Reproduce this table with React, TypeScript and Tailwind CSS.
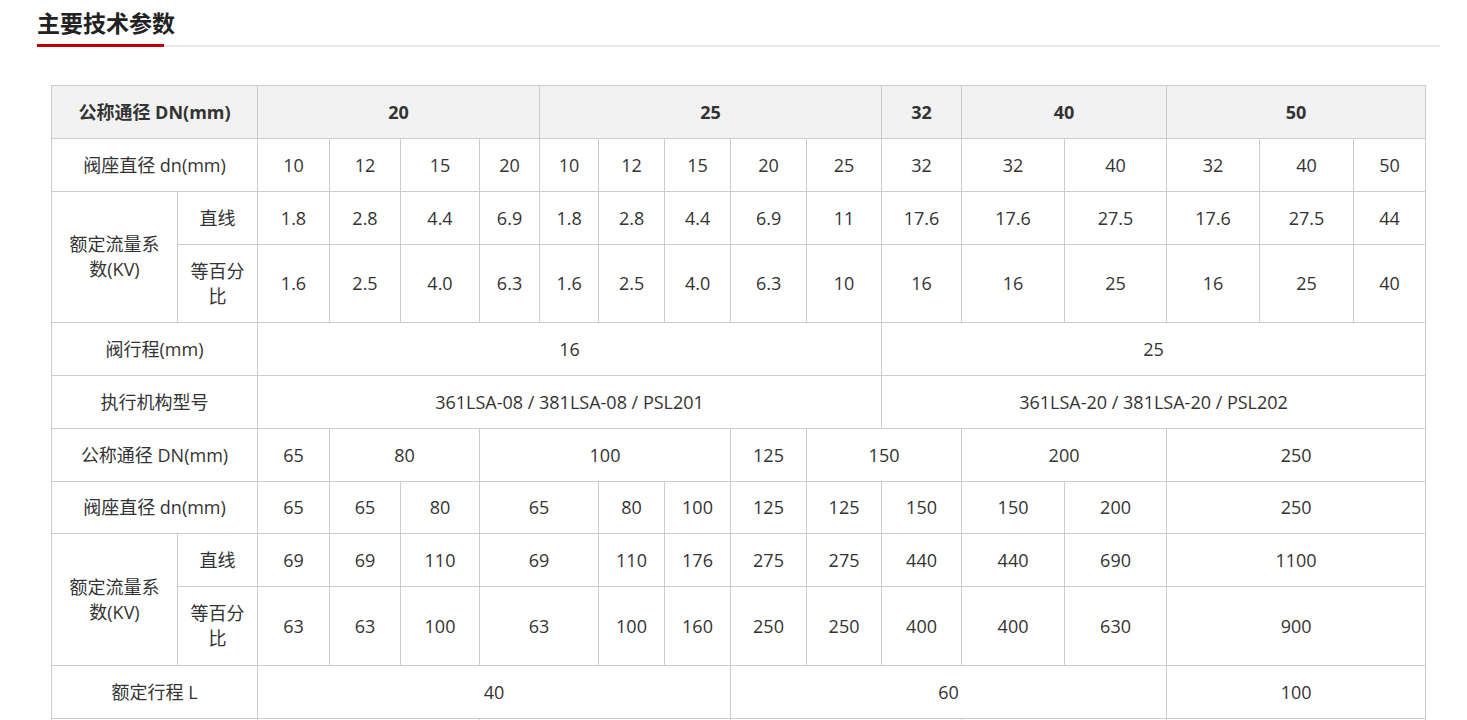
import React from "react";

type Cell = { t: string; c?: number; r?: number; px?: string };

const cols = [126, 80, 72, 71, 79, 60, 59, 66, 66, 76, 75, 80, 103, 102, 93, 94, 72];

const s = (arr: (string | Cell)[]): Cell[] => arr.map((x) => (typeof x === "string" ? { t: x } : x));

const header: Cell[] = s([
  { t: "公称通径 DN(mm)", c: 2 },
  { t: "20", c: 4 },
  { t: "25", c: 5 },
  "32",
  { t: "40", c: 2 },
  { t: "50", c: 3 },
]);

const rows: { h: string; cells: Cell[] }[] = [
  { h: "h-[53px]", cells: s([{ t: "阀座直径 dn(mm)", c: 2 }, "10", "12", "15", "20", "10", "12", "15", "20", "25", "32", "32", "40", "32", "40", "50"]) },
  { h: "h-[53px]", cells: s([{ t: "额定流量系数(KV)", r: 2, px: "px-[16px]" }, "直线", "1.8", "2.8", "4.4", "6.9", "1.8", "2.8", "4.4", "6.9", "11", "17.6", "17.6", "27.5", "17.6", "27.5", "44"]) },
  { h: "h-[78px]", cells: s(["等百分比", "1.6", "2.5", "4.0", "6.3", "1.6", "2.5", "4.0", "6.3", "10", "16", "16", "25", "16", "25", "40"]) },
  { h: "h-[53px]", cells: s([{ t: "阀行程(mm)", c: 2 }, { t: "16", c: 9 }, { t: "25", c: 6 }]) },
  { h: "h-[53px]", cells: s([{ t: "执行机构型号", c: 2 }, { t: "361LSA-08 / 381LSA-08 / PSL201", c: 9 }, { t: "361LSA-20 / 381LSA-20 / PSL202", c: 6 }]) },
  { h: "h-[53px]", cells: s([{ t: "公称通径 DN(mm)", c: 2 }, "65", { t: "80", c: 2 }, { t: "100", c: 4 }, "125", { t: "150", c: 2 }, { t: "200", c: 2 }, { t: "250", c: 3 }]) },
  { h: "h-[52px]", cells: s([{ t: "阀座直径 dn(mm)", c: 2 }, "65", "65", "80", { t: "65", c: 2 }, "80", "100", "125", "125", "150", "150", "200", { t: "250", c: 3 }]) },
  { h: "h-[53px]", cells: s([{ t: "额定流量系数(KV)", r: 2, px: "px-[16px]" }, "直线", "69", "69", "110", { t: "69", c: 2 }, "110", "176", "275", "275", "440", "440", "690", { t: "1100", c: 3 }]) },
  { h: "h-[79px]", cells: s(["等百分比", "63", "63", "100", { t: "63", c: 2 }, "100", "160", "250", "250", "400", "400", "630", { t: "900", c: 3 }]) },
  { h: "h-[53px]", cells: s([{ t: "额定行程 L", c: 2 }, { t: "40", c: 7 }, { t: "60", c: 5 }, { t: "100", c: 3 }]) },
  { h: "h-[53px]", cells: s([{ t: "\u00a0", c: 2 }, { t: "\u00a0", c: 3 }, { t: "\u00a0", c: 4 }, { t: "\u00a0", c: 3 }, { t: "\u00a0", c: 2 }, { t: "\u00a0", c: 3 }]) },
];

export default function App() {
  return (
    <div className="min-h-screen bg-white font-['Open_Sans','Noto_Sans_CJK_SC',sans-serif] text-[#333]">
      <div className="ml-[37px] w-[1403px]">
        <div className="relative border-b-2 border-[#e8e8e8] pt-[6px] pb-[7px]">
          <h2 className="text-[23px] font-bold leading-[32px] text-[#222] font-['Noto_Sans_CJK_SC',sans-serif]">主要技术参数</h2>
          <div className="absolute left-0 bottom-[-2px] h-[3px] w-[127px] bg-[#c00000]" />
        </div>
        <table className="ml-[14px] mt-[38px] w-[1374px] table-fixed border-collapse text-[18px] leading-[25px]">
          <colgroup>
            {cols.map((w, i) => (
              <col key={i} style={{ width: w }} />
            ))}
          </colgroup>
          <tbody>
            <tr className="h-[53px] bg-[#f2f2f2]">
              {header.map((cell, i) => (
                <td key={i} colSpan={cell.c} className="border border-[#cccccc] px-[10px] text-center align-middle font-bold">
                  {cell.t}
                </td>
              ))}
            </tr>
            {rows.map((row, ri) => (
              <tr key={ri} className={row.h}>
                {row.cells.map((cell, ci) => (
                  <td
                    key={ci}
                    colSpan={cell.c}
                    rowSpan={cell.r}
                    className={`border border-[#cccccc] text-center align-middle ${cell.px ?? "px-[10px]"}`}
                  >
                    {cell.t}
                  </td>
                ))}
              </tr>
            ))}
          </tbody>
        </table>
      </div>
    </div>
  );
}
